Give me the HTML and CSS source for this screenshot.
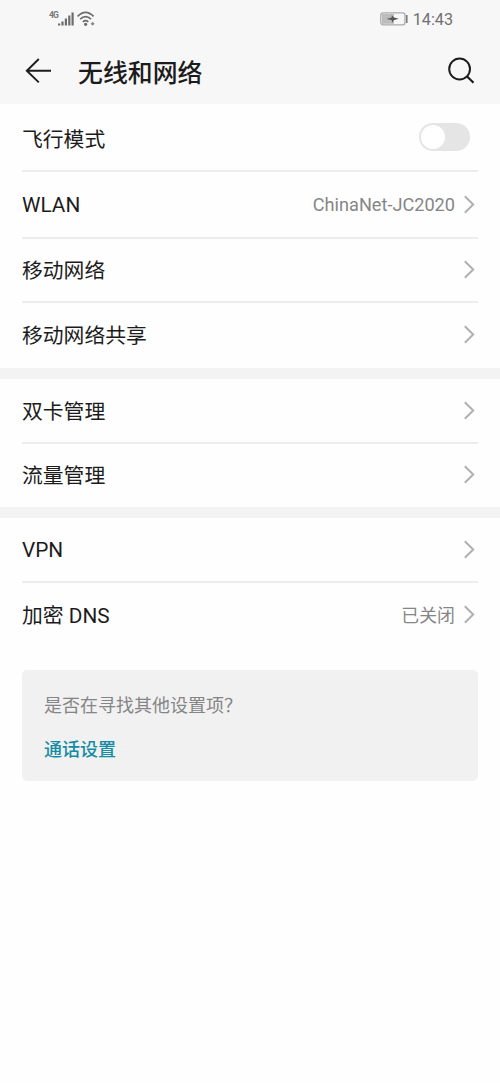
FILE: index.html
```html
<!DOCTYPE html>
<html lang="zh-CN">
<head>
<meta charset="utf-8">
<title>无线和网络</title>
<link rel="stylesheet" href="styles.css">
</head>
<body>
<svg class="defs" width="0" height="0" aria-hidden="true">
  <symbol id="chevron" viewBox="0 0 12 20"><path d="M1.8 1.3 10.2 9.5 1.8 17.7" fill="none" stroke="#b0b0b0" stroke-width="2"/></symbol>
</svg>
<header class="top">
  <div class="status">
    <div class="signals">
      <span class="net">4G</span>
      <svg class="bars" width="17" height="15" viewBox="0 0 17 15" fill="#6c6c6c"><path d="M0 11.5h2.2v2H0zM3.4 9.5h2.2v4H3.4zM6.8 6.5H9v7H6.8zM10.2 3.5h2.2v10h-2.2zM13.5 .5h2.2v13h-2.2z"/></svg>
      <svg class="wifi" width="20" height="16" viewBox="0 0 20 16"><path d="M.6 5.4Q8.6 -2.6 16.6 5.4M3.2 8.2Q8.6 3 14 8.2M5.9 10.8Q8.6 8.4 11.3 10.8" fill="none" stroke="#6c6c6c" stroke-width="1.7"/><circle cx="8.6" cy="13.3" r="1.6" fill="#6c6c6c"/><path d="m15.6 10.8 2 2-2 2-2-2z" fill="#8a8a8a"/></svg>
    </div>
    <div class="power">
      <svg width="28" height="14" viewBox="0 0 28 14"><rect x=".8" y=".8" width="24.2" height="12" rx="2.2" fill="#f7f7f7" stroke="#aaa" stroke-width="1.3"/><path d="M2 2h12v9.8H2z" fill="#bcbcbc"/><path d="m6.5 7 5.2-1.5V3.2L14 5.6l4.8 1.2-5.2 1.4-1.3 2.5-.7-2.6z" fill="#555"/><path d="M26.8 3v8" stroke="#777" stroke-width="1.5"/></svg>
      <span class="time">14:43</span>
    </div>
  </div>
  <div class="titlebar">
    <svg class="back" width="28" height="28" viewBox="0 0 28 28"><path d="M27 13.7H2.5M14.8 2 2.8 13.7 14.8 25.4" fill="none" stroke="#1c1c1c" stroke-width="1.9"/></svg>
    <h1>无线和网络</h1>
    <svg class="search" width="28" height="28" viewBox="0 0 28 28"><circle cx="11.6" cy="12" r="10.4" fill="none" stroke="#1c1c1c" stroke-width="2"/><path d="m18.9 19.2 6.6 6.5" stroke="#1c1c1c" stroke-width="2.2"/></svg>
  </div>
</header>
<main>
  <section class="group">
    <div class="row tall"><span class="label">飞行模式</span><span class="switch"><span class="knob"></span></span></div>
    <div class="row wlan"><span class="label latin">WLAN</span><span class="value latin">ChinaNet-JC2020</span><svg class="chev"><use href="#chevron"/></svg></div>
    <div class="row short"><span class="label high">移动网络</span><svg class="chev"><use href="#chevron"/></svg></div>
    <div class="row last"><span class="label">移动网络共享</span><svg class="chev"><use href="#chevron"/></svg></div>
  </section>
  <section class="group">
    <div class="row"><span class="label">双卡管理</span><svg class="chev"><use href="#chevron"/></svg></div>
    <div class="row last shorter"><span class="label">流量管理</span><svg class="chev"><use href="#chevron"/></svg></div>
  </section>
  <section class="group">
    <div class="row"><span class="label latin">VPN</span><svg class="chev"><use href="#chevron"/></svg></div>
    <div class="row last"><span class="label">加密 DNS</span><span class="value">已关闭</span><svg class="chev"><use href="#chevron"/></svg></div>
  </section>
  <aside class="card">
    <p class="question">是否在寻找其他设置项？</p>
    <a class="link">通话设置</a>
  </aside>
</main>
</body>
</html>
```

FILE: styles.css
```css
* { box-sizing: border-box; }
body {
  margin: 0;
  min-height: 1083px;
  background: #fefefe;
  color: #1c1c1c;
  font-family: Roboto, "Noto Sans CJK SC", sans-serif;
}
.defs { display: block; }
.top { height: 104px; background: #f7f7f7; }
.status {
  height: 38px;
  padding: 0 47px 0 49px;
  display: flex;
  align-items: center;
  justify-content: space-between;
}
.signals, .power { display: flex; align-items: center; }
.net {
  font-size: 8.5px;
  line-height: 8px;
  font-weight: 700;
  color: #777;
  width: 9px;
  letter-spacing: -1px;
  margin-bottom: 9px;
}
.wifi { margin-left: 2px; }
.power { gap: 5px; }
.time { font-size: 16.2px; color: #707070; line-height: 20px; padding-top: 2px; }
.titlebar {
  height: 66px;
  padding: 0 24px;
  display: flex;
  align-items: center;
}
h1 {
  margin: 6px 0 0 26px;
  flex: 1;
  font-size: 24.9px;
  line-height: 36px;
  font-weight: 500;
}
.group + .group { border-top: 11px solid #f3f3f3; }
.row {
  margin: 0 22px;
  height: 65px;
  border-bottom: 2px solid #ededed;
  display: flex;
  align-items: center;
}
.tall { height: 68px; }
.wlan { height: 67px; }
.short { height: 64px; }
.shorter { height: 63px; }
.last { border-bottom-color: transparent; }
.label { flex: 1; font-size: 20.8px; line-height: 30px; padding-top: 3px; }
.label.high { padding-top: 1px; }
.tall .label { padding-top: 5px; }
.latin { padding-top: 1px; }
.value { font-size: 17.9px; line-height: 26px; color: #868686; margin-right: 8px; padding-top: 2px; }
.value.latin { font-size: 18.15px; padding-top: 0; }
.chev { width: 12px; height: 20px; margin-right: 3px; }
.switch {
  width: 51px;
  height: 28px;
  margin-right: 8px;
  padding: 2px;
  border-radius: 14px;
  background: #e5e5e5;
}
.knob {
  display: block;
  width: 24px;
  height: 24px;
  border-radius: 50%;
  background: #fff;
}
.card {
  margin: 22px 22px 0;
  height: 111px;
  padding: 22px;
  border-radius: 5px;
  background: #f1f1f1;
}
.question { margin: 0; font-size: 18px; line-height: 28px; color: #858585; }
.link {
  display: block;
  margin-top: 16px;
  font-size: 18px;
  line-height: 28px;
  font-weight: 500;
  color: #168ba4;
}
```
